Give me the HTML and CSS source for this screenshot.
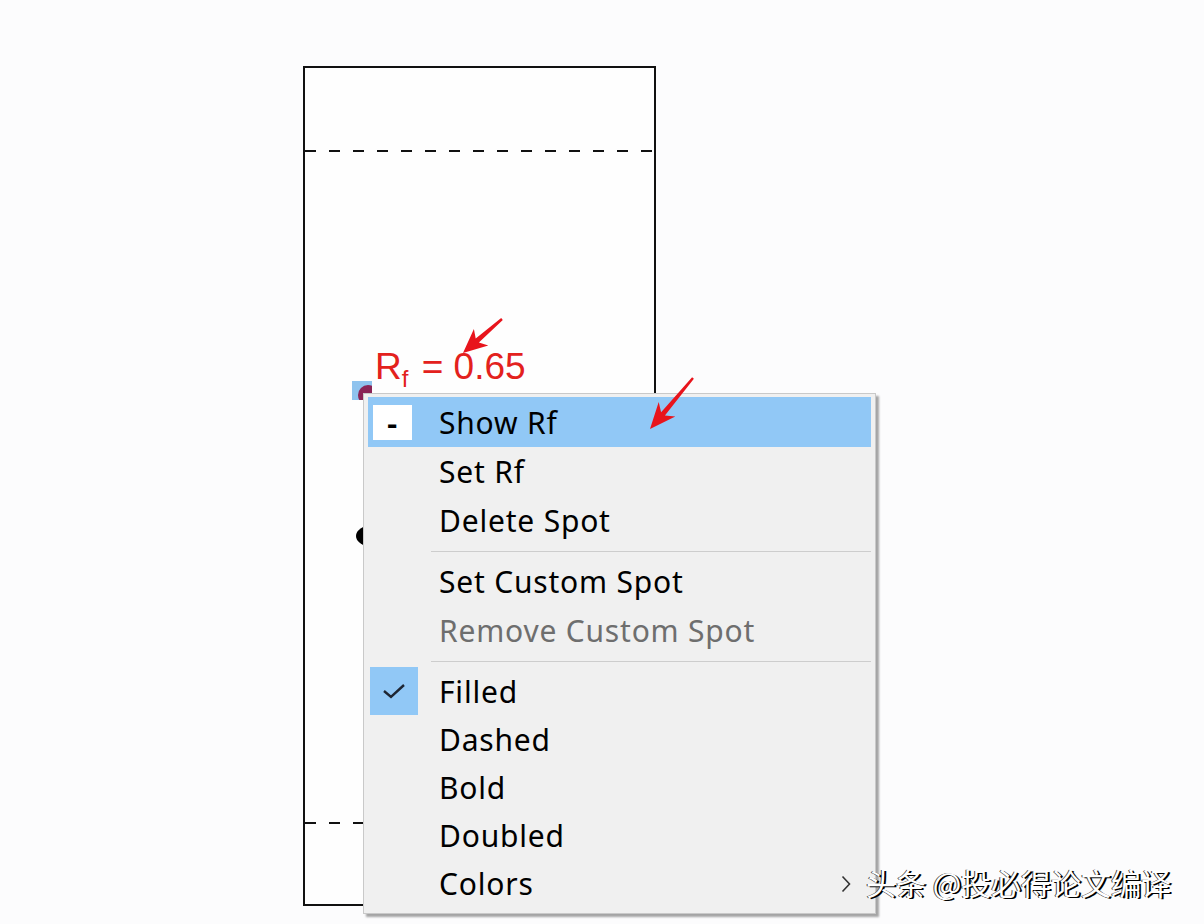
FILE: index.html
```
<!DOCTYPE html>
<html lang="en">
<head>
    <meta charset="UTF-8">
    <title>TLC plate - spot menu</title>
    <link rel="stylesheet" href="styles.css">
</head>
<body>
    <div class="stage">
        <!-- the TLC plate -->
        <div class="plate">
            <div class="line line-top"></div>
            <div class="line line-bottom"></div>
        </div>

        <div class="blob"></div>
        <div class="spot-select"><span class="spot"></span></div>

        <div class="rf-label">R<sub>f</sub> = 0.65</div>

        <!-- context menu -->
        <div class="menu">
            <div class="item active">
                <span class="icon box">-</span>
                <span class="label">Show Rf</span>
            </div>
            <div class="item"><span class="icon"></span><span class="label">Set Rf</span></div>
            <div class="item"><span class="icon"></span><span class="label">Delete Spot</span></div>
            <div class="sep"></div>
            <div class="item"><span class="icon"></span><span class="label">Set Custom Spot</span></div>
            <div class="item disabled"><span class="icon"></span><span class="label">Remove Custom Spot</span></div>
            <div class="sep"></div>
            <div class="item small">
                <span class="icon checked">
                    <svg width="24" height="18" viewBox="0 0 24 18">
                        <path d="M2 9 L9 15 L22 3" fill="none" stroke="#1e2633" stroke-width="2.4"/>
                    </svg>
                </span>
                <span class="label">Filled</span>
            </div>
            <div class="item small"><span class="icon"></span><span class="label">Dashed</span></div>
            <div class="item small"><span class="icon"></span><span class="label">Bold</span></div>
            <div class="item small"><span class="icon"></span><span class="label">Doubled</span></div>
            <div class="item small">
                <span class="icon"></span>
                <span class="label">Colors</span>
                <svg class="more" width="10" height="18" viewBox="0 0 10 18">
                    <path d="M1.5 1.5 L8.5 9 L1.5 16.5" fill="none" stroke="#333" stroke-width="1.6"/>
                </svg>
            </div>
        </div>

        <!-- red call-out arrows, drawn over everything -->
        <svg class="arrows" width="1204" height="924" viewBox="0 0 1204 924">
            <polygon points="463,353 473.9,328.9 475.7,338.6 501.2,318.1 502.8,319.9 478.9,342.4 488.3,345.5" fill="#e8141c"/>
            <polygon points="650,429 658.7,402.1 661.1,412.2 692.1,377.2 693.9,378.8 664.9,415.4 675.3,416.5" fill="#e8141c"/>
        </svg>

        <div class="watermark">头条 @投必得论文编译</div>
    </div>
</body>
</html>
```

FILE: styles.css
```
body {
    margin: 0;
    background: #fcfcfd;
    font-family: "Noto Sans", "Liberation Sans", sans-serif;
}

.stage {
    position: relative;
    width: 1204px;
    height: 924px;
    overflow: hidden;
}

/* plate drawing */
.plate {
    position: absolute;
    left: 303px;
    top: 66px;
    width: 349px;
    height: 836px;
    border: 2px solid #111;
    background: #fefefe;
}

.line {
    position: absolute;
    left: 0;
    right: 0;
    height: 2px;
    background: repeating-linear-gradient(to right, #111 0, #111 11px, transparent 11px, transparent 24px);
}

.line-top {
    top: 82px;
}

.line-bottom {
    top: 754px;
}

.blob {
    position: absolute;
    left: 356px;
    top: 525px;
    width: 34px;
    height: 22px;
    border-radius: 50%;
    background: #000;
}

.spot-select {
    position: absolute;
    left: 352px;
    top: 381px;
    width: 20px;
    height: 19px;
    background: #8fc3ee;
    overflow: hidden;
}

.spot {
    position: absolute;
    left: 6px;
    top: 4px;
    width: 20px;
    height: 20px;
    border-radius: 50%;
    background: #8a2456;
}

.rf-label {
    position: absolute;
    left: 375px;
    top: 345px;
    color: #e3211d;
    font-family: "Liberation Sans", Arial, sans-serif;
    font-size: 37px;
    line-height: 44px;
}

.rf-label sub {
    font-size: 24px;
    vertical-align: -8px;
    margin-right: 3px;
}

.arrows {
    position: absolute;
    left: 0;
    top: 0;
}

/* context menu */
.menu {
    position: absolute;
    left: 363px;
    top: 393px;
    width: 503px;
    padding: 3px 4px 6px;
    background: #f0f0f0;
    border: 1px solid #c9c9c9;
    box-shadow: 3px 3px 2px rgba(0, 0, 0, 0.35);
    display: flex;
    flex-direction: column;
}

.item {
    height: 49px;
    display: flex;
    align-items: center;
    color: #000;
    font-size: 30px;
    letter-spacing: 0.8px;
}

.item.small {
    height: 48px;
}

.item.active {
    height: 50px;
    background: #91c8f6;
}

.item.disabled {
    color: #6e6e6e;
}

.icon {
    width: 71px;
    flex: none;
    display: flex;
    align-items: center;
    justify-content: center;
}

.icon.box {
    width: 39px;
    height: 35px;
    margin: 0 27px 0 5px;
    background: #fff;
    font-size: 32px;
    font-weight: 600;
    line-height: 35px;
}

.icon.checked {
    width: 48px;
    height: 48px;
    margin: 0 21px 0 2px;
    background: #91c8f6;
}

.label {
    flex: 1;
    white-space: nowrap;
}

.more {
    flex: none;
    margin: 2px 20px 0 0;
}

.sep {
    height: 12px;
    display: flex;
    align-items: center;
    padding-left: 63px;
}

.sep::after {
    content: "";
    flex: 1;
    height: 1px;
    background: #cdcdcd;
}

.watermark {
    position: absolute;
    left: 866px;
    top: 862px;
    color: #fff;
    font-family: "Noto Sans CJK SC", sans-serif;
    font-size: 30px;
    line-height: 40px;
    text-shadow: 2px 1px 0 #000, -1px 0 0 #444;
}
```
